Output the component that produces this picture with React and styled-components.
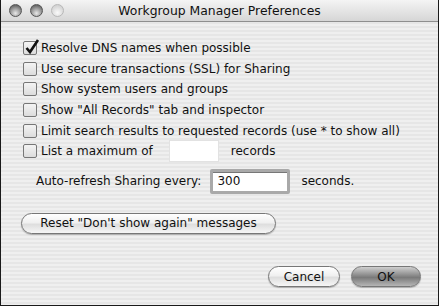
import React, { useState } from "react";
import styled, { createGlobalStyle } from "styled-components";

const GlobalStyle = createGlobalStyle`
  html, body {
    margin: 0;
    padding: 0;
    background: #fff;
  }
  * {
    box-sizing: border-box;
  }
`;

const Window = styled.div`
  width: 439px;
  height: 306px;
  border: 1px solid #1a1a1a;
  border-top: none;
  display: flex;
  flex-direction: column;
  font-family: "DejaVu Sans", "Liberation Sans", sans-serif;
  font-size: 12px;
  color: #111;
  background: repeating-linear-gradient(
    to bottom,
    #efefef 0px,
    #efefef 2px,
    #e6e6e6 2px,
    #e6e6e6 4px
  );
`;

const TitleBar = styled.div`
  height: 22px;
  flex: none;
  display: flex;
  align-items: center;
  position: relative;
  background: linear-gradient(to bottom, #f4f4f4, #d6d6d6);
  border-bottom: 1px solid #8e8e8e;
  padding-left: 8px;
  gap: 8px;
`;

const Light = styled.span`
  width: 13px;
  height: 13px;
  border-radius: 50%;
  border: 1px solid ${({ dim }) => (dim ? "#b8b8b8" : "#555")};
  background: ${({ dim }) =>
    dim
      ? "radial-gradient(circle at 50% 70%, #fafafa 0%, #dadada 60%, #c8c8c8 100%)"
      : "radial-gradient(circle at 50% 75%, #e8e8e8 0%, #9a9a9a 50%, #444 100%)"};
`;

const Title = styled.div`
  position: absolute;
  left: 0;
  right: 0;
  text-align: center;
  font-size: 12.4px;
  pointer-events: none;
`;

const Body = styled.div`
  flex: 1;
  display: flex;
  flex-direction: column;
  padding: 19px 0 0 22px;
`;

const Checks = styled.div`
  display: flex;
  flex-direction: column;
  gap: 6px;
`;

const Row = styled.label`
  display: flex;
  align-items: center;
  height: 14.6px;
  gap: 4px;
  white-space: nowrap;
`;

const Box = styled.span`
  width: 14px;
  height: 14px;
  flex: none;
  border: 1px solid #777;
  border-radius: 2px;
  background: linear-gradient(to bottom, #f4f4f4, #dcdcdc);
  position: relative;
`;

const Tick = styled.svg`
  position: absolute;
  left: 1px;
  top: -3px;
`;

const SmallField = styled.span`
  display: inline-block;
  width: 50px;
  height: 22px;
  background: #fff;
  border: 1px solid #e2e2e2;
  margin: 0 8px 0 12px;
`;

const RefreshRow = styled.div`
  display: flex;
  align-items: center;
  margin: 10px 0 0 13px;
  white-space: nowrap;
`;

const Field = styled.div`
  width: 80px;
  height: 25px;
  margin: 0 11px 0 9px;
  background: #fff;
  border: 3px solid #a9a9a9;
  border-radius: 2px;
  box-shadow: inset 0 1px 0 #777;
  padding: 1px 4px;
  display: flex;
  align-items: center;
`;

const Pill = styled.button`
  font: inherit;
  color: #111;
  height: 21px;
  width: ${({ w }) => w}px;
  padding: 0;
  border-radius: 11px;
  border: 1px solid #777;
  background: ${({ primary }) =>
    primary
      ? "linear-gradient(to bottom, #cfcfcf 0%, #8a8a8a 45%, #7a7a7a 55%, #b5b5b5 100%)"
      : "linear-gradient(to bottom, #ffffff 0%, #f0f0f0 45%, #dedede 55%, #f6f6f6 100%)"};
  box-shadow: 0 1px 1px rgba(0, 0, 0, 0.25);
  white-space: nowrap;
`;

const ResetWrap = styled.div`
  margin: 19px 0 0 -2px;
`;

const Footer = styled.div`
  margin-top: auto;
  display: flex;
  justify-content: flex-end;
  gap: 11px;
  padding: 0 17px 18px 0;
`;

const options = [
  { label: "Resolve DNS names when possible", on: true },
  { label: "Use secure transactions (SSL) for Sharing" },
  { label: "Show system users and groups" },
  { label: 'Show "All Records" tab and inspector' },
  { label: "Limit search results to requested records (use * to show all)" },
];

const Check = ({ on }) => (
  <Box>
    {on && (
      <Tick width="15" height="16" viewBox="0 0 15 16">
        <path d="M1.5 9 L5 13 L13 1" fill="none" stroke="#111" strokeWidth="2.6" />
      </Tick>
    )}
  </Box>
);

const App = () => {
  const [checks] = useState(options);
  return (
    <>
      <GlobalStyle />
      <Window>
        <TitleBar>
          <Light />
          <Light />
          <Light dim />
          <Title>Workgroup Manager Preferences</Title>
        </TitleBar>
        <Body>
          <Checks>
            {checks.map((o) => (
              <Row key={o.label}>
                <Check on={o.on} />
                {o.label}
              </Row>
            ))}
            <Row>
              <Check />
              List a maximum of
              <SmallField />
              records
            </Row>
          </Checks>
          <RefreshRow>
            Auto-refresh Sharing every:
            <Field>300</Field>
            seconds.
          </RefreshRow>
          <ResetWrap>
            <Pill w={255}>Reset "Don't show again" messages</Pill>
          </ResetWrap>
          <Footer>
            <Pill w={72}>Cancel</Pill>
            <Pill w={70} primary>
              OK
            </Pill>
          </Footer>
        </Body>
      </Window>
    </>
  );
};

export default App;
